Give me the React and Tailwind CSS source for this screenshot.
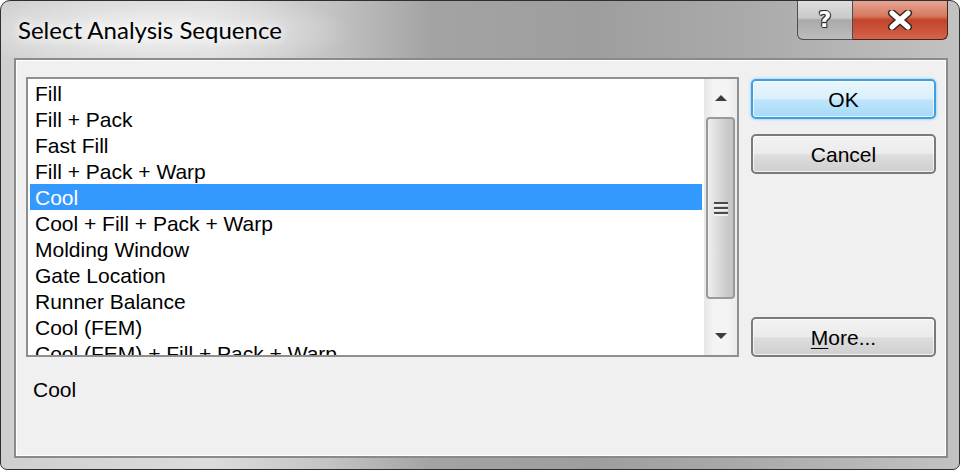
import React from 'react';

const items = [
  'Fill',
  'Fill + Pack',
  'Fast Fill',
  'Fill + Pack + Warp',
  'Cool',
  'Cool + Fill + Pack + Warp',
  'Molding Window',
  'Gate Location',
  'Runner Balance',
  'Cool (FEM)',
  'Cool (FEM) + Fill + Pack + Warp',
];

const selected = 'Cool';

const DialogButton = ({ children, isDefault }) => (
  <button
    className={`h-[40px] w-full rounded-[5px] border-2 text-[21px] leading-none text-black ${
      isDefault
        ? 'border-[#3c9fe0] bg-[linear-gradient(to_bottom,#eaf6fd_0%,#d9f0fc_50%,#bee6fd_52%,#a7d9f5_100%)] shadow-[0_0_3px_#6fc3f4]'
        : 'border-[#7a7a7a] bg-[linear-gradient(to_bottom,#f2f2f2_0%,#ebebeb_50%,#dddddd_52%,#cfcfcf_100%)]'
    }`}
    style={{ fontFamily: '"Liberation Sans", Arial, sans-serif' }}
  >
    <span className="block rounded-[3px] border border-white/70 h-full leading-[36px]">{children}</span>
  </button>
);

const ScrollBar = () => (
  <div className="flex w-[33px] flex-col bg-[linear-gradient(to_right,#e6e6e6,#f4f4f4_30%,#f4f4f4_70%,#e9e9e9)]">
    <div className="flex h-[38px] items-center justify-center">
      <svg width="14" height="8" viewBox="0 0 14 8">
        <path d="M1 7 L7 1 L13 7 Z" fill="#3c3c3c" />
      </svg>
    </div>
    <div className="mx-[2px] flex h-[182px] items-center justify-center rounded-[4px] border-2 border-[#9a9a9a] bg-[linear-gradient(to_right,#eeeeee,#dcdcdc_40%,#cdcdcd_70%,#c4c4c4)]">
      <svg width="16" height="16" viewBox="0 0 16 16">
        <path d="M1 3 H15 M1 8 H15 M1 13 H15" stroke="#4a4a4a" strokeWidth="2" />
        <path d="M1 5 H15 M1 10 H15 M1 15 H15" stroke="#f7f7f7" strokeWidth="1.5" />
      </svg>
    </div>
    <div className="flex-1" />
    <div className="flex h-[38px] items-center justify-center">
      <svg width="14" height="8" viewBox="0 0 14 8">
        <path d="M1 1 L7 7 L13 1 Z" fill="#3c3c3c" />
      </svg>
    </div>
  </div>
);

export default function App() {
  return (
    <div className="h-[472px] w-[962px] bg-white">
      <div className="flex h-[470px] w-[960px] flex-col rounded-t-[10px] rounded-b-[7px] border border-[#2f2f2f] bg-[linear-gradient(to_right,#cfcfcf_0%,#dcdcdc_22%,#c4c4c4_34%,#a3a3a3_45%,#9e9e9e_62%,#aaaaaa_78%,#c2c2c2_100%)]">
        {/* Title bar */}
        <div className="relative flex h-[57px] items-start justify-between rounded-t-[9px] bg-[radial-gradient(ellipse_200px_42px_at_150px_30px,rgba(245,245,245,0.95),rgba(230,230,230,0.6)_60%,rgba(230,230,230,0)_100%)]">
          <div
            className="ml-[17px] mt-[15px] text-[24px] leading-[28px] text-black [text-shadow:0_0_8px_#fff,0_0_14px_#fff]"
            style={{ fontFamily: 'Lato, "Noto Sans", sans-serif' }}
          >
            Select Analysis Sequence
          </div>
          <div className="mr-[11px] flex h-[39px]">
            <div className="flex w-[56px] items-center justify-center rounded-bl-[6px] border border-t-0 border-[#4d4d4d] bg-[linear-gradient(to_bottom,#dedede_0%,#c9c9c9_45%,#a9a9a9_50%,#bdbdbd_100%)]">
              <span
                className="text-[22px] font-bold leading-none text-white [text-shadow:1px_0_0_#2e2e2e,-1px_0_0_#2e2e2e,0_1px_0_#2e2e2e,0_-1px_0_#2e2e2e,1px_1px_0_#2e2e2e,-1px_-1px_0_#2e2e2e]"
                style={{ fontFamily: '"DejaVu Sans", sans-serif' }}
              >
                ?
              </span>
            </div>
            <div className="flex w-[95px] items-center justify-center rounded-br-[6px] border border-l-0 border-t-0 border-[#4d2219] bg-[linear-gradient(to_bottom,#e6a493_0%,#d5795f_40%,#c2432a_50%,#d2654b_100%)]">
              <svg width="26" height="20" viewBox="0 0 26 20">
                <path d="M5 3 L21 17 M21 3 L5 17" stroke="#3a2420" strokeWidth="8" strokeLinecap="round" />
                <path d="M5 3 L21 17 M21 3 L5 17" stroke="#ffffff" strokeWidth="5" strokeLinecap="round" />
              </svg>
            </div>
          </div>
        </div>

        {/* Client area */}
        <div className="mb-[11px] ml-[13px] mr-[11px] flex-1 border-2 border-[#8a8a8a]">
          <div
            className="h-full border border-white bg-[#f0f0f0] pl-[9px] pr-[9px] pt-[16px]"
            style={{ fontFamily: '"Liberation Sans", Arial, sans-serif' }}
          >
            <div className="flex">
              <div className="flex h-[280px] w-[713px] border-2 border-[#8e8f8f] bg-white">
                <div className="flex-1 overflow-hidden pl-[2px] pr-[2px] pt-[1px]">
                  {items.map((item) => (
                    <div
                      key={item}
                      className={`h-[26px] whitespace-nowrap pl-[5px] text-[21px] leading-[27px] ${
                        item === selected ? 'bg-[#3399ff] text-white' : 'text-black'
                      }`}
                    >
                      {item}
                    </div>
                  ))}
                </div>
                <ScrollBar />
              </div>
              <div className="ml-[12px] flex w-[185px] flex-col pt-[2px]">
                <DialogButton isDefault>OK</DialogButton>
                <div className="mt-[15px]">
                  <DialogButton>Cancel</DialogButton>
                </div>
                <div className="flex-1" />
                <DialogButton>
                  <span className="underline decoration-1 underline-offset-[3px]">M</span>ore...
                </DialogButton>
              </div>
            </div>
            <div className="mt-[20px] pl-[7px] text-[21px] leading-[26px] text-black">{selected}</div>
          </div>
        </div>
      </div>
    </div>
  );
}
